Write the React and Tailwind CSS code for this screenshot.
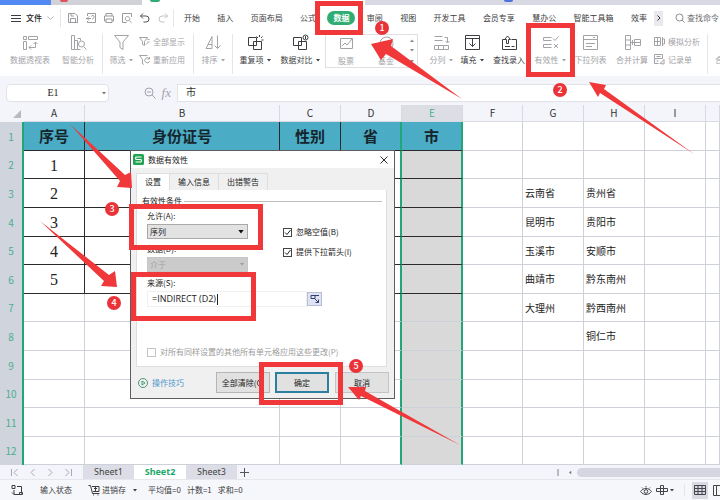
import React from "react";

function Icon({ children, className = "", size = "h-[17px] w-[17px]", box = "0 0 17 17" }) {
  return (
    <svg viewBox={box} className={`${size} shrink-0 ${className}`} fill="none" stroke="currentColor" strokeWidth="1" aria-hidden="true">
      {children}
    </svg>
  );
}

function Caret({ className = "" }) {
  return (
    <svg viewBox="0 0 4 3" className={`h-[3px] w-[4px] shrink-0 ${className}`} fill="currentColor" aria-hidden="true">
      <path d="M0 0h4L2 2.6z" />
    </svg>
  );
}

function Divider({ className = "h-[40px]" }) {
  return <span className={`w-px shrink-0 bg-[#e6e6ea] ${className}`} />;
}

/* ---------- window strip and menu ---------- */

function WindowStrip() {
  return (
    <div className="flex h-[5px] overflow-hidden bg-[#d9d9e3]">
      <span className="w-[51px] bg-[#5289f3]" />
      <span className="w-[91px] bg-[#d1d1d8] pl-[9px]">
        <span className="block h-[2px] w-[8px] rounded-b-full bg-[#e0525c]" />
      </span>
      <span className="w-[223px] bg-white pl-[8px]">
        <span className="block h-[2px] w-[10px] rounded-b-full bg-[#35a877]" />
      </span>
      <span className="pl-[139px]">
        <span className="block h-[2px] w-[9px] rounded-b-full bg-[#4c74dd]" />
      </span>
    </div>
  );
}

const quick = [
  { name: "保存", tone: "text-[#9b9b9f]", d: "M1.5 1.5h6.5l2.5 2.5v6.5h-9zM3.5 10V6.5h5V10M4 1.5v2.5h3" },
  { name: "输出", tone: "text-[#9b9b9f]", d: "M2.5 4V1.5h8v9h-8V9M1 6.5h5M4 4.5l-2 2 2 2M6.5 4.5c0-1.500 2.500-1.500 2.500 0s-1 2.500-2 2.500" },
  { name: "打印", tone: "text-[#9b9b9f]", d: "M3 4V1.500h6V4M3 9H1.500V4h9v5H9M3 7h6v3.500H3z" },
  { name: "打印预览", tone: "text-[#9b9b9f]", d: "M5.500 10.500h-4v-9h9V5M6.500 4.500a2.200 2.200 0 1 0 .010 0M8.300 8.500l2.200 2.200" },
  { name: "撤消", tone: "text-[#55555a]", d: "M4 1.500 1.500 4 4 6.500M1.500 4H7a3 3 0 0 1 0 6H4.500" },
  { name: "恢复", tone: "text-[#c3c3c7]", d: "M8 1.500 10.500 4 8 6.500M10.500 4H5a3 3 0 0 0 0 6h2.500" },
];

const menus = ["开始", "插入", "页面布局", "公式", "数据", "审阅", "视图", "开发工具", "会员专享", "慧办公", "智能工具箱", "效率"];

function MenuBar() {
  return (
    <div className="flex h-[26px] items-center bg-white pl-[11px] text-[8px] text-[#3c3c40]">
      <button className="flex items-center gap-[5px]">
        <Icon size="h-[9px] w-[10px]" box="0 0 10 9"><path d="M0 1.500h10M0 4.500h10M0 7.500h10" /></Icon>
        <span className="font-medium text-[#222]">文件</span>
        <Icon size="h-[5px] w-[7px]" box="0 0 7 5" className="text-[#b5b5b9]"><path d="M.5.5l3 3 3-3" /></Icon>
      </button>
      <Divider className="ml-[6px] h-[18px]" />
      <div className="ml-[6px] flex gap-[6px]">
        {quick.map((q) => (
          <button key={q.name} aria-label={q.name} className={q.tone}>
            <Icon size="h-[12px] w-[12px]" box="0 0 12 12"><path d={q.d} /></Icon>
          </button>
        ))}
      </div>
      <Divider className="ml-[4px] h-[18px]" />
      <nav className="ml-[10px] mr-[7px] flex flex-1 items-center justify-between whitespace-nowrap">
        {menus.map((m) =>
          m === "数据" ? (
            <button key={m} className="-mx-[6px] h-[14px] w-[28px] rounded-full bg-[#2fad72] font-bold text-white">{m}</button>
          ) : (
            <button key={m}>{m}</button>
          )
        )}
      </nav>
      <button aria-label="更多" className="grid h-[15px] w-[9px] place-items-center bg-[#e9e9ee] text-[#333]">
        <Icon size="h-[6px] w-[4px]" box="0 0 4 6"><path d="M.5.5 3 3 .5 5.500" /></Icon>
      </button>
      <button className="ml-[12px] flex w-[45px] shrink-0 items-center gap-[2px] whitespace-nowrap text-[#6b6b70]">
        <Icon size="h-[10px] w-[10px]" box="0 0 10 10" className="text-[#8d8d92]"><circle cx="4.500" cy="4.500" r="3.500" /><path d="m7 7 2.500 2.500" /></Icon>
        查找命令
      </button>
    </div>
  );
}

/* ---------- ribbon ---------- */

function Tool({ label, width, caret, dim, children }) {
  return (
    <button className={`flex ${width} shrink-0 flex-col items-center gap-[4px] whitespace-nowrap ${dim ? "text-[#a3a3a7]" : "text-[#3d3d42]"}`}>
      <Icon>{children}</Icon>
      <span className="flex h-[10px] items-center gap-[3px]">
        {label}
        {caret && <Caret />}
      </span>
    </button>
  );
}

function ToolPair({ items, className }) {
  return (
    <div className={`flex shrink-0 flex-col gap-[7px] text-[#a3a3a7] ${className}`}>
      {items.map((it) => (
        <button key={it.label} className="flex h-[11px] items-center gap-[3px] whitespace-nowrap">
          <Icon size="h-[11px] w-[11px]" box="0 0 11 11"><path d={it.d} /></Icon>
          {it.label}
        </button>
      ))}
    </div>
  );
}

function Ribbon() {
  return (
    <div className="flex h-[45px] items-start overflow-hidden bg-white pt-[3px] pl-[6px] text-[8px] leading-[10px]">
      <Tool label="数据透视表" width="w-[48px]" dim>
        <path d="M1.500 2.500h3v3h-3zM6.500 2.500h9v3h-9zM1.500 7.500h3v8h-3zM7 13.500h6.500V8M9 11.500l-2 2 2 2M11.500 10l2-2 2 2" />
      </Tool>
      <Tool label="智能分析" width="w-[48px]" dim>
        <path d="M1.500 1.500h3v14h-3zM4.500 6.500h3v9h-3M7.500 15.500h3M7.500 4.500h3v2" /><circle cx="11.500" cy="10" r="3" /><path d="m13.500 12.500 3 3" />
      </Tool>
      <Divider />
      <Tool label="筛选" width="w-[36px]" caret dim><path d="M1.500 1.500h14l-5.500 6.500v7.500l-3-2V8z" /></Tool>
      <ToolPair
        className="w-[54px] pt-[2px]"
        items={[
          { label: "全部显示", d: "M.5 1.500h8l-3 4v4l-2-1v-3zM8.500 3.500h2M8.500 6h2M7 8.500l2-2" },
          { label: "重新应用", d: "M.5 1.500h8M.5 1.500l3 4v4l1.500 1M10 4.500a2.500 2.500 0 1 0 .5 3M10.500 3v2h-2" },
        ]}
      />
      <Divider />
      <Tool label="排序" width="w-[38px]" caret dim><path d="M1 14.500 7 2.500v12M3 10.500h4M1 14.500h6M12.500 1.500v13M9.500 11.500l3 3 3-3" /></Tool>
      <Divider />
      <Tool label="重复项" width="w-[44px]" caret>
        <path d="M1.500 3.500h8v8h-8zM6.500 7.500h8v8h-8zM12.500 1v2M15.500 2.500l-1.500 1.500M16.500 6h-2M9.500 2.500l1.500 1.500" />
      </Tool>
      <Tool label="数据对比" width="w-[46px]" caret>
        <path d="M1.500 3.500h8v8h-8zM6.500 7.500h8v8h-8z" /><circle cx="13.500" cy="3.500" r="2.500" fill="#fff" /><path d="M13.500 2v3" />
      </Tool>
      <div className="ml-[2px] flex h-[34px] w-[93px] shrink-0 items-start border border-[#e0e0e4] pl-[1px]">
        <Tool label="股票" width="w-[38px]" dim><path d="M2.500 3.500h12v10h-12zM4 11l3-3 2 2 5-6" /></Tool>
        <Tool label="基金" width="w-[42px]" dim><circle cx="8.500" cy="8.500" r="6.500" /><path d="m5.500 6 3 3 3-3M5.500 9.500h6M8.500 9v4" /></Tool>
        <div className="flex h-full w-[10px] flex-col items-center justify-around text-[#88888c]">
          <Caret className="rotate-180" />
          <Caret />
          <Caret />
        </div>
      </div>
      <Tool label="分列" width="ml-[7px] w-[32px]" caret dim>
        <path d="M1.500 2.500h8M1.500 6.500h8M11.500 3.500h3v5M12.500 7l2 2 2-2M1.500 11.500h4v4h-4zM5.500 11.500h5v4h-5zM10.500 11.500h5v4h-5z" />
      </Tool>
      <Tool label="填充" width="w-[30px]" caret><path d="M1.500 1.500h14v14h-14zM1.500 4.500h14M8.500 4.500v8M5.500 9.500l3 3 3-3" /></Tool>
      <Tool label="查找录入" width="w-[44px]">
        <path d="M4 5.500H1.500v10h14v-10h-5M5.500 9.500V5.500H3.500L6.500 2l3 3.500h-2v4zM4 12.500h5M10.500 12.500h3" />
      </Tool>
      <Tool label="有效性" width="w-[38px]" caret dim>
        <path d="M1.500 3.500h8M1.500 3.500v3h8M1.500 10.500h8M1.500 10.500v3h8M11 4.500l2 2 3.500-4M12 10l4 4M16 10l-4 4" />
      </Tool>
      <Tool label="下拉列表" width="w-[43px]" dim>
        <path d="M1.500 1.500h14v14h-14zM1.500 5.500h14M4 9.500h9M4 12.500h6M11 3l1 1 1-1" />
      </Tool>
      <Tool label="合并计算" width="w-[40px]" dim>
        <path d="M1.500 1.500h5v14h-5zM1.500 6h5M1.500 11h5M6.500 8.500h4M10.500 5.500h6v6h-6zM10.500 8.500h6M8.500 6v5" />
      </Tool>
      <ToolPair
        className="w-[55px] pt-[2px] pl-[2px]"
        items={[
          { label: "模拟分析", d: "M.5 1.500h6v8h-6zM.5 5.500h6M3.500 1.500v8M8.500 3h2v5h-2M8.500 1v9" },
          { label: "记录单", d: "M.5.5h8v4h-8zM.5 4.500v5h4M2.500 2.500h4M2.500 7h2M6 9.500l4-4v4.500z" },
        ]}
      />
      <Divider />
      <div className="flex-1 overflow-hidden pt-[21px] pl-[7px] text-[#a3a3a7]">合</div>
    </div>
  );
}

function FormulaBar() {
  return (
    <div className="flex h-[29px] items-start bg-[#f4f5fa] pt-[8px] pl-[6px]">
      <label className="flex h-[18px] w-[103px] items-center rounded-sm border border-[#e2e3e9] bg-white pr-[2px]">
        <input aria-label="名称框" defaultValue="E1" className="h-[16px] w-0 flex-1 pr-[3px] text-center font-['Liberation_Serif',serif] text-[10px] leading-[16px] text-[#222] outline-none" />
        <Caret className="text-[#777]" />
      </label>
      <div className="flex h-[18px] w-[68px] items-center justify-end gap-[6px] pr-[6px] text-[#a2a3ab]">
        <Icon size="h-[12px] w-[12px]" box="0 0 12 12"><circle cx="5" cy="5" r="4" /><path d="m8 8 3.500 3.500M3 5h4" /></Icon>
        <span className="font-['Liberation_Serif',serif] text-[13px] leading-[16px] italic">fx</span>
      </div>
      <label className="flex h-[18px] flex-1 border border-r-0 border-[#e2e3e9] bg-white">
        <input aria-label="编辑栏" defaultValue="市" className="h-[14px] w-full pl-[8px] text-[10px] leading-[14px] text-[#333] outline-none" />
      </label>
    </div>
  );
}

/* ---------- worksheet ---------- */

const columns = [
  ["A", "w-[61px]"], ["B", "w-[195px]"], ["C", "w-[61px]"], ["D", "w-[61px]"], ["E", "w-[61px]"],
  ["F", "w-[60px]"], ["G", "w-[61px]"], ["H", "w-[61px]"], ["I", "w-[61px]"], ["", ""],
];

const data = {
  1: { A: "序号", B: "身份证号", C: "性别", D: "省", E: "市" },
  2: { A: "1" },
  3: { A: "2", G: "云南省", H: "贵州省" },
  4: { A: "3", G: "昆明市", H: "贵阳市" },
  5: { A: "4", G: "玉溪市", H: "安顺市" },
  6: { A: "5", G: "曲靖市", H: "黔东南州" },
  7: { G: "大理州", H: "黔西南州" },
  8: { H: "铜仁市" },
};

const tallRows = [1, 3, 4, 6, 8, 9, 11];

function cellClass(row, col) {
  const inTable = row <= 6 && "ABCDE".includes(col);
  const parts = ["border-b p-0 whitespace-nowrap"];
  parts.push(inTable ? "border-b-[#2b2b2b]" : "border-b-[#cfd1d8]");
  if (col === "D" || col === "E") parts.push("border-r-2 border-r-[#21a675]");
  else parts.push(inTable ? "border-r border-r-[#2b2b2b]" : "border-r border-r-[#cfd1d8]");
  if (inTable && row === 1) parts.push("bg-[#4bacc6] text-center text-[15px] leading-[18px] font-bold text-[#16252b]");
  else if (col === "E") parts.push("bg-[#d9d9d9]");
  else if (inTable) parts.push("bg-white pt-[2px] text-center font-['Liberation_Serif',serif] text-[16px] leading-[18px] text-[#222]");
  else parts.push("bg-white pl-[2px] text-left text-[10px] leading-[14px] text-[#222]");
  return parts.join(" ");
}

function Sheet() {
  return (
    <table className="w-full table-fixed border-separate border-spacing-0">
      <thead>
        <tr className="h-[17px] text-[10px] leading-[14px]">
          <th className="w-[24px] bg-[#f4f5fa] p-0">
            <svg viewBox="0 0 8 8" className="mr-[3px] ml-auto h-[8px] w-[8px]" fill="#b9bac0" aria-hidden="true"><path d="M8 0v8H0z" /></svg>
          </th>
          {columns.map(([c, w], i) => (
            <th key={i} className={`border-r border-b border-[#d8dae1] p-0 font-normal ${w} ${c === "E" ? "bg-[#dcdee4] text-[#4bae94]" : "bg-[#f4f5fa] text-[#333]"}`}>
              {c}
            </th>
          ))}
        </tr>
      </thead>
      <tbody>
        {Array.from({ length: 12 }, (_, i) => i + 1).map((r) => (
          <tr key={r} className={tallRows.includes(r) ? "h-[29px]" : "h-[28px]"}>
            <th className="border-r-2 border-r-[#21a675] bg-[#d0d4dc] p-0 text-[10px] leading-[14px] font-normal text-[#4bae94]">{r}</th>
            {columns.map(([c], i) => (
              <td key={i} className={cellClass(r, c || "J")}>{data[r]?.[c]}</td>
            ))}
          </tr>
        ))}
      </tbody>
    </table>
  );
}

/* ---------- data validation dialog ---------- */

function Check({ label, checked, dim }) {
  return (
    <label className={`flex items-center gap-[4px] whitespace-nowrap ${dim ? "text-[#9b9b9b]" : ""}`}>
      <span className="grid h-[9px] w-[9px] place-items-center">
        <input type="checkbox" defaultChecked={checked} disabled={dim} className={`col-start-1 row-start-1 h-[9px] w-[9px] appearance-none border bg-white ${dim ? "border-[#c4c4c4]" : "border-[#444]"}`} />
        {checked && (
          <Icon size="h-[7px] w-[7px]" box="0 0 7 7" className="pointer-events-none col-start-1 row-start-1"><path d="m1 3.500 2 2L6.500 1" /></Icon>
        )}
      </span>
      {label}
    </label>
  );
}

function Drop({ id, label, value, dim }) {
  return (
    <div className="flex w-[101px] flex-col">
      <label htmlFor={id} className="h-[16px] leading-[16px]">{label}</label>
      <span className="grid items-center">
        <select id={id} disabled={dim} className={`col-start-1 row-start-1 h-[15px] w-full appearance-none border pl-[2px] ${dim ? "border-[#c6c6c6] bg-[#cbcbcb] text-[#a2a2a2] opacity-100" : "border-[#a9a9a9] bg-[#e2e2e2]"}`}>
          <option>{value}</option>
        </select>
        <Caret className={`pointer-events-none col-start-1 row-start-1 mr-[4px] justify-self-end ${dim ? "text-[#999]" : "h-[4px] w-[6px] text-[#111]"}`} />
      </span>
    </div>
  );
}

function ValidationDialog() {
  const tab = "h-full border border-b-0 border-[#dedede]";
  return (
    <section role="dialog" aria-label="数据有效性" className="absolute top-[45px] left-[130px] flex h-[249px] w-[265px] flex-col border border-[#5d5d5d] bg-[#f0f0f0] text-[8px] leading-[10px] text-[#222]">
      <header className="flex h-[17px] shrink-0 items-center bg-white px-[2px]">
        <svg viewBox="0 0 11 11" className="h-[11px] w-[11px]" aria-hidden="true">
          <rect width="11" height="11" rx="1.500" fill="#21a452" />
          <path d="M8.500 3h-5a.8.8 0 0 0-.8.8v.9c0 .5.3.8.8.8h4c.5 0 .8.3.8.8v.9a.8.8 0 0 1-.8.8h-5" fill="none" stroke="#fff" strokeWidth="1.200" />
        </svg>
        <h2 className="ml-[4px] flex-1">数据有效性</h2>
        <button aria-label="关闭" className="mr-[4px]">
          <Icon size="h-[8px] w-[8px]" box="0 0 8 8"><path d="m.5.5 7 7M7.500.5l-7 7" /></Icon>
        </button>
      </header>
      <div className="mt-[5px] ml-[5px] flex h-[17px] shrink-0">
        <button className={`${tab} w-[34px] bg-white`}>设置</button>
        <button className={`${tab} w-[49px] border-l-0`}>输入信息</button>
        <button className={`${tab} w-[49px] border-l-0`}>出错警告</button>
      </div>
      <div className="mr-[7px] ml-[5px] h-[177px] shrink-0 border border-t-0 border-[#dedede] bg-white pt-[6px] pl-[5px]">
        <div className="flex items-center gap-[2px] pr-[4px]">
          有效性条件<span className="h-px flex-1 bg-[#bdbdbd]" />
        </div>
        <div className="flex gap-[35px] pl-[5px]">
          <div className="flex flex-col gap-[2px] pt-[2px]">
            <Drop id="allow" label="允许(A):" value="序列" />
            <Drop id="operator" label="数据(D):" value="介于" dim />
          </div>
          <div className="flex flex-col gap-[10px] pt-[21px]">
            <Check label="忽略空值(B)" checked />
            <Check label="提供下拉箭头(I)" checked />
          </div>
        </div>
        <div className="mt-[3px] pl-[5px]">
          <label htmlFor="source" className="block h-[16px] leading-[16px]">来源(S):</label>
          <div className="flex items-center">
            <span className="flex h-[16px] w-[160px] items-center border border-[#f0f0f0] bg-white pl-[4px]">
              <input id="source" defaultValue="=INDIRECT (D2)" className="h-[14px] w-[65px] font-['Open_Sans','Noto_Sans',sans-serif] text-[9px] leading-[14px] outline-none" />
              <span className="h-[11px] w-px bg-[#222]" />
            </span>
            <button aria-label="选取区域" className="grid h-[14px] w-[15px] place-items-center border border-[#b9bdd6] bg-[#dfe3f3] text-[#33406f]">
              <Icon size="h-[10px] w-[10px]" box="0 0 10 10"><path d="M1 1.500h4v3H1zM4.500 4.500l4 4M8.500 5.500v3h-3M1 1.500h8" /></Icon>
            </button>
          </div>
        </div>
        <div className="mt-[40px] pl-[5px]">
          <Check label="对所有同样设置的其他所有单元格应用这些更改(P)" dim />
        </div>
      </div>
      <footer className="flex flex-1 items-center pl-[7px]">
        <a href="#tips" className="flex w-[78px] items-center gap-[4px] text-[#4b96cc]">
          <Icon size="h-[10px] w-[10px]" box="0 0 10 10" className="text-[#4b9a76]"><circle cx="5" cy="5" r="4.500" /><path d="M4 3v4l3-2z" /></Icon>
          操作技巧
        </a>
        <button className="h-[21px] w-[54px] border border-[#b5b5b5] bg-[#e1e1e1]">全部清除(C)</button>
        <button className="ml-[5px] h-[21px] w-[54px] border-2 border-[#2b7f9f] bg-[#e1e1e1]">确定</button>
        <button className="ml-[6px] h-[21px] w-[54px] border border-[#c4c4c4] bg-[#e1e1e1]">取消</button>
      </footer>
    </section>
  );
}

/* ---------- bottom bars ---------- */

function SheetTabs() {
  const nav = ["M1.500 1v7M7.500 1 4 4.500 7.500 8", "M6.500 1 3 4.500 6.500 8", "M2.500 1 6 4.500 2.500 8", "M7.500 1v7M1.500 1 5 4.500 1.500 8"];
  return (
    <div className="flex h-[15px] items-center border-b border-[#e6e7ec] bg-[#f4f5fa] pl-[10px] font-['Noto_Sans',sans-serif] text-[9px] leading-[14px]">
      <div className="flex w-[73px] gap-[9px] text-[#a9aab1]">
        {nav.map((d, i) => (
          <button key={d} aria-label={["首个", "上一个", "下一个", "末个"][i]}>
            <Icon size="h-[9px] w-[9px]" box="0 0 9 9"><path d={d} /></Icon>
          </button>
        ))}
      </div>
      <button className="h-full w-[51px] bg-[#dcdde6] text-[#444]">Sheet1</button>
      <button className="h-full w-[52px] bg-white font-bold text-[#21a66a]">Sheet2</button>
      <button className="h-full w-[51px] bg-[#dcdde6] text-[#444]">Sheet3</button>
      <button aria-label="新建工作表" className="ml-[3px] text-[#55565c]">
        <Icon size="h-[9px] w-[9px]" box="0 0 9 9"><path d="M4.500 0v9M0 4.500h9" /></Icon>
      </button>
      <div className="ml-auto flex w-[163px] items-center">
        <span className="h-[7px] w-[2px] bg-[#b9bac2]" />
        <Caret className="ml-[9px] rotate-90 text-[#777]" />
        <span className="ml-[5px] h-[9px] flex-1 rounded-l-full bg-[#d5d6df]" />
      </div>
    </div>
  );
}

function StatusBar() {
  return (
    <div className="flex h-[20px] items-center bg-[#f6f7fb] pl-[11px] text-[8px] whitespace-nowrap text-[#3c3c40]">
      <Icon size="h-[12px] w-[12px]" box="0 0 12 12"><path d="M1 1.500h3v3H1zM6 2.500h4.500v7M3 6v4.500h6M1 8.500l2 2M8.500 8.500h3v2h-3z" /></Icon>
      <span className="ml-[17px]">输入状态</span>
      <Icon size="h-[12px] w-[12px]" box="0 0 12 12" className="ml-[16px]"><path d="M.5 1.500h2l2 8h7M4 2.500h7v5H5M6 4.500h3M7.500 3v4M5 11h1M9.500 11h1" /></Icon>
      <button className="ml-[2px] flex items-center gap-[7px]">进销存<Caret /></button>
      <span className="ml-[11px] flex gap-[6px]"><span>平均值=0</span><span>计数=1</span><span>求和=0</span></span>
      <div className="ml-auto flex items-center text-[#44454b]">
        <Icon size="h-[11px] w-[12px]" box="0 0 12 11"><path d="M.5 6.500c3-4 8-4 11 0-3 4-8 4-11 0M2 2.500l1 1M6 1v1.500M10 2.500l-1 1" /><circle cx="6" cy="6.500" r="1.800" /></Icon>
        <Icon size="h-[12px] w-[12px]" box="0 0 12 12" className="ml-[4px]"><path d="M4.500 1.500h3v9h-3zM.5 4.500h11v3H.5z" /></Icon>
        <Caret className="ml-[2px]" />
        <Divider className="ml-[10px] h-[12px]" />
        <button aria-label="普通视图" className="ml-[7px] grid h-[17px] w-[16px] place-items-center bg-[#d9dae3]">
          <Icon size="h-[10px] w-[12px]" box="0 0 12 10"><path d="M.5.5h11v9H.5zM.5 3.500h11M.5 6.500h11M4 .5v9M8 .5v9" /></Icon>
        </button>
        <span className="ml-[5px] w-[7px] overflow-hidden">
          <Icon size="h-[11px] w-[12px]" box="0 0 12 11"><path d="M.5.5h11v10H.5zM3.500.5v10M7.500.5v10" /></Icon>
        </span>
      </div>
    </div>
  );
}

/* ---------- tutorial marks drawn over the window ---------- */

const frames = [
  "top-[1px] left-[315px] h-[34px] w-[48px]",
  "top-[23px] left-[526px] h-[54px] w-[49px]",
  "top-[204px] left-[129px] h-[46px] w-[134px]",
  "top-[272px] left-[131px] h-[49px] w-[125px]",
  "top-[362px] left-[259px] h-[43px] w-[84px]",
];

const badges = [
  "top-[21px] left-[375px]",
  "top-[83px] left-[553px]",
  "top-[202px] left-[105px]",
  "top-[296px] left-[107px]",
  "top-[359px] left-[349px]",
];

const arrows = [
  "371,44 393,39 391,46 462,99 386,54 381,60",
  "589,82 606,85 604,89 694,154 600,93 598,97",
  "132,188 131,172 125,175 70,124 120,181 117,187",
  "117,287 115,271 109,275 40,221 104,281 101,286",
  "348,387 366,387 365,391 460,445 361,396 359,400",
];

function Marks() {
  return (
    <div className="pointer-events-none absolute inset-0 overflow-hidden">
      {frames.map((f) => <div key={f} className={`absolute border-5 border-[#f0383b] ${f}`} />)}
      <svg viewBox="0 0 720 500" className="absolute top-0 left-0 h-[500px] w-[720px]" fill="#f0383b" aria-hidden="true">
        {arrows.map((a) => <polygon key={a} points={a} />)}
      </svg>
      {badges.map((b, i) => (
        <span key={b} className={`absolute grid h-[14px] w-[14px] place-items-center rounded-full bg-[#ea3338] text-[9px] leading-[14px] font-medium text-white ${b}`}>{i + 1}</span>
      ))}
    </div>
  );
}

export default function App() {
  return (
    <div className="relative flex min-h-screen flex-col overflow-hidden bg-[#f6f7fb] font-['Noto_Sans_CJK_SC',sans-serif]">
      <WindowStrip />
      <MenuBar />
      <Ribbon />
      <FormulaBar />
      <main className="relative">
        <Sheet />
        <ValidationDialog />
      </main>
      <SheetTabs />
      <StatusBar />
      <Marks />
    </div>
  );
}
